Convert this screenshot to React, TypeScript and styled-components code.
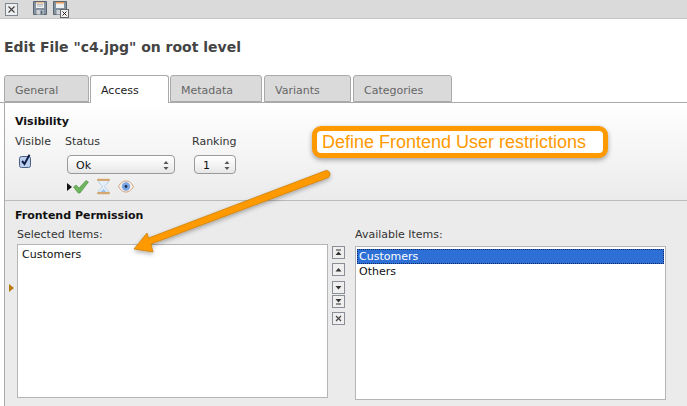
import React from "react";
import styled, { createGlobalStyle } from "styled-components";

const Global = createGlobalStyle`
  html, body { margin: 0; padding: 0; background: #fff; }
  * { box-sizing: border-box; }
`;

const font = `"DejaVu Sans", Verdana, sans-serif`;

const Page = styled.div`
  position: relative;
  width: 687px;
  height: 406px;
  overflow: hidden;
  background: #fff;
  font-family: ${font};
  font-size: 11px;
  color: #222;
`;

const Toolbar = styled.div`
  height: 19px;
  background: #dadada;
  border-bottom: 1px solid #c4c4c4;
  display: flex;
  align-items: flex-start;
  padding: 0 0 0 5px;
`;

const ToolIcon = styled.svg<{ $gap?: number; $top: number }>`
  display: block;
  margin-left: ${(p) => p.$gap ?? 0}px;
  margin-top: ${(p) => p.$top}px;
`;

const Heading = styled.h1`
  margin: 0;
  padding: 20px 0 0 4px;
  height: 56px;
  font-size: 14px;
  line-height: 16px;
  font-weight: 700;
  color: #444;
`;

const Tabs = styled.div`
  display: flex;
  padding-left: 4px;
  height: 28px;
  border-bottom: 1px solid #aaa;
`;

const Tab = styled.div<{ $w: number; $active?: boolean; $gap: number }>`
  width: ${(p) => p.$w}px;
  margin-right: ${(p) => p.$gap}px;
  height: ${(p) => (p.$active ? 28 : 27)}px;
  background: ${(p) => (p.$active ? "#fff" : "#dadada")};
  border: 1px solid #aaa;
  border-bottom: ${(p) => (p.$active ? "none" : "1px solid #aaa")};
  border-radius: 3px 3px 0 0;
  padding: 8px 0 0 10px;
  font-size: 11px;
  line-height: 14px;
  color: ${(p) => (p.$active ? "#222" : "#666")};
  position: relative;
`;

const Body = styled.div`
  margin-left: 4px;
  border-left: 1px solid #aaa;
`;

const Visibility = styled.section`
  height: 98px;
  padding: 12px 0 0 10px;
  background: linear-gradient(#fff, #ebebeb);
  border-bottom: 1px solid #bbb;
`;

const SectionTitle = styled.h2`
  margin: 0;
  font-size: 11px;
  line-height: 13px;
  font-weight: 700;
  color: #111;
`;

const FieldRow = styled.div`
  display: flex;
  margin-top: 7px;
`;

const Field = styled.div<{ $w: number }>`
  width: ${(p) => p.$w}px;
`;

const FieldLabel = styled.div`
  font-size: 11px;
  line-height: 13px;
  color: #333;
`;

const CheckWrap = styled.div`
  margin: 6px 0 0 4px;
  width: 13px;
  height: 14px;
`;

const FakeSelect = styled.div<{ $w: number; $ml: number }>`
  margin: 7px 0 0 ${(p) => p.$ml}px;
  width: ${(p) => p.$w}px;
  height: 19px;
  border: 1px solid #9a9a9a;
  border-radius: 4px;
  background: linear-gradient(#fff, #f4f4f4 50%, #e6e6e6);
  display: flex;
  align-items: center;
  justify-content: space-between;
  padding: 1px 5px 0 8px;
  font-size: 11px;
  color: #111;
`;

const StatusIcons = styled.div`
  display: flex;
  align-items: center;
  gap: 7px;
  margin: 4px 0 0 2px;
`;

const Marker2 = styled.svg`
  margin-right: -6px;
`;

const Permission = styled.section`
  background: #ebebeb;
  height: 206px;
  padding: 8px 0 0 10px;
  position: relative;
`;

const Lists = styled.div`
  display: flex;
  margin: 6px 0 0 0;
  align-items: flex-start;
`;

const ListColumn = styled.div<{ $w: number; $pad: number }>`
  width: ${(p) => p.$w}px;
  padding-left: ${(p) => p.$pad}px;
`;

const ListBox = styled.div<{ $h: number; $top: number }>`
  margin-top: ${(p) => p.$top}px;
  height: ${(p) => p.$h}px;
  background: #fff;
  border: 1px solid #b5b5b5;
  font-size: 11px;
  padding: 2px 1px;
  color: #111;
`;

const Option = styled.div<{ $selected?: boolean; $indent: number }>`
  padding-left: ${(p) => p.$indent}px;
  height: 15px;
  line-height: 15px;
  background: ${(p) => (p.$selected ? "#2e6fd6" : "transparent")};
  color: ${(p) => (p.$selected ? "#fff" : "#111")};
  outline: ${(p) => (p.$selected ? "1px dotted #0b2a66" : "none")};
  outline-offset: -1px;
`;

const MoveButtons = styled.div`
  width: 27px;
  margin-top: 18px;
  padding-left: 4px;
  display: flex;
  flex-direction: column;
`;

const MoveButton = styled.svg<{ $mb: number }>`
  display: block;
  margin-bottom: ${(p) => p.$mb}px;
`;

const Marker = styled.div`
  position: absolute;
  left: 4px;
  top: 83px;
  width: 0;
  height: 0;
  border-left: 5px solid #b97a10;
  border-top: 4px solid transparent;
  border-bottom: 4px solid transparent;
`;

const Callout = styled.div`
  position: absolute;
  left: 312px;
  top: 126px;
  width: 296px;
  height: 32px;
  border: 5px solid #ff9900;
  border-radius: 9px;
  background: #fff;
  box-shadow: 0 2px 5px rgba(0, 0, 0, 0.35);
  color: #ff9900;
  font-family: "Liberation Sans", Arial, sans-serif;
  font-size: 18px;
  line-height: 22px;
  padding-left: 5px;
  white-space: nowrap;
`;

const ArrowSvg = styled.svg`
  position: absolute;
  left: 0;
  top: 0;
  pointer-events: none;
`;

const CloseDoc = () => (
  <ToolIcon $top={3} width="13" height="13" viewBox="0 0 13 13">
    <rect x=".5" y=".5" width="12" height="12" fill="#eceef0" stroke="#7f868e" />
    <path d="M3.5 3.5l6 6M9.5 3.5l-6 6" stroke="#444" strokeWidth="1.2" />
  </ToolIcon>
);

const Floppy = ({ gap }: { gap: number }) => (
  <ToolIcon $gap={gap} $top={1} width="14" height="14" viewBox="0 0 14 14">
    <path d="M.5.5h13v13H.5z" fill="#8492a0" stroke="#5b6772" />
    <rect x="3" y="1" width="8" height="6" fill="#eef0f2" />
    <rect x="3" y="1" width="8" height="1.5" fill="#e9b98a" />
    <path d="M4 3.5h6M4 5h6" stroke="#b5bcc4" />
    <rect x="3.5" y="9" width="7" height="4.5" fill="#cfd4d9" />
    <rect x="7.5" y="9.5" width="2" height="4" fill="#5b6772" />
  </ToolIcon>
);

const FloppyClose = ({ gap }: { gap: number }) => (
  <ToolIcon $gap={gap} $top={1} width="16" height="17" viewBox="0 0 16 17">
    <path d="M.5.5h13v13H.5z" fill="#8492a0" stroke="#5b6772" />
    <rect x="3" y="1" width="8" height="6" fill="#eef0f2" />
    <rect x="3" y="1" width="8" height="1.5" fill="#e99a55" />
    <rect x="3.5" y="9" width="7" height="4.5" fill="#cfd4d9" />
    <rect x="7.5" y="8.5" width="8" height="8" fill="#f2f2f2" stroke="#666" />
    <path d="M9.5 10.5l4 4M13.5 10.5l-4 4" stroke="#222" />
  </ToolIcon>
);

const Updown = () => (
  <svg width="6" height="11" viewBox="0 0 6 11">
    <path d="M3 1l2.5 3h-5zM3 10L.5 7h5z" fill="#555" />
  </svg>
);

const Checkbox = () => (
  <svg width="13" height="14" viewBox="0 0 13 14" style={{ display: "block" }}>
    <rect x=".5" y="2.5" width="11" height="11" rx="2" fill="#bcd0ee" stroke="#4a5f86" />
    <path d="M3 7l2.5 3L10.5.8" fill="none" stroke="#10204a" strokeWidth="2" />
  </svg>
);

const Status = () => (
  <>
    <Marker2 width="5" height="8" viewBox="0 0 5 8">
      <path d="M0 0l5 4-5 4z" fill="#111" />
    </Marker2>
    <svg width="16" height="15" viewBox="0 0 16 15">
      <path d="M.5 8l2.7-2L6 9 13 1.5l2.5 1.5L7 14H5.2z" fill="#6cb55c" stroke="#4a8c3e" strokeWidth=".6" />
    </svg>
    <svg width="15" height="17" viewBox="0 0 15 17">
      <path d="M2.5 2.5h10C12.5 6 9 7 8.5 8.5c.5 1.5 4 3 4 6h-10c0-3 3.5-4.5 4-6C6 7 2.5 6 2.5 2.5z" fill="#e4effb" stroke="#b5cde8" />
      <path d="M4.5 14l3-3 3 3z" fill="#9cc0e8" />
      <rect x="1" y=".8" width="13" height="2.2" rx="1" fill="#d4a772" />
      <rect x="1" y="14" width="13" height="2.2" rx="1" fill="#d4a772" />
    </svg>
    <svg width="16" height="13" viewBox="0 0 16 13">
      <path d="M.5 6.5C3 2 5.5 1 8 1s5 1 7.5 5.5C13 11 10.5 12 8 12S3 11 .5 6.5z" fill="#f8efe6" stroke="#d2a383" />
      <circle cx="8" cy="6.5" r="4.2" fill="#7aa6e6" />
      <circle cx="8" cy="6.5" r="1.4" fill="#1d2f55" />
    </svg>
  </>
);

const glyphs: Record<string, string> = {
  top: "M4 3.5h5v1H4zM6.5 5.5L9.5 9h-6z",
  up: "M6.5 5L9.5 8.5h-6z",
  down: "M6.5 8.5L3.5 5h6z",
  bottom: "M6.5 7.5L3.5 4h6zM4 8.5h5v1H4z",
};

const Move = ({ kind, mb }: { kind: string; mb: number }) => (
  <MoveButton $mb={mb} width="13" height="13" viewBox="0 0 13 13">
    <rect x=".5" y=".5" width="12" height="12" fill="#efefef" stroke="#8a8f96" />
    {kind === "x" ? (
      <path d="M4 4l5 5M9 4l-5 5" stroke="#444" strokeWidth="1.2" />
    ) : (
      <path d={glyphs[kind]} fill="#333" />
    )}
  </MoveButton>
);

export default function App() {
  return (
    <Page>
      <Global />
      <Toolbar>
        <CloseDoc />
        <Floppy gap={15} />
        <FloppyClose gap={6} />
      </Toolbar>
      <Heading>Edit File "c4.jpg" on root level</Heading>
      <Tabs>
        <Tab $w={85} $gap={1}>General</Tab>
        <Tab $w={79} $gap={1} $active>Access</Tab>
        <Tab $w={92} $gap={2}>Metadata</Tab>
        <Tab $w={87} $gap={2}>Variants</Tab>
        <Tab $w={99} $gap={0}>Categories</Tab>
      </Tabs>
      <Body>
        <Visibility>
          <SectionTitle>Visibility</SectionTitle>
          <FieldRow>
            <Field $w={50}>
              <FieldLabel>Visible</FieldLabel>
              <CheckWrap><Checkbox /></CheckWrap>
            </Field>
            <Field $w={127}>
              <FieldLabel>Status</FieldLabel>
              <FakeSelect $w={108} $ml={2}>Ok<Updown /></FakeSelect>
              <StatusIcons><Status /></StatusIcons>
            </Field>
            <Field $w={60}>
              <FieldLabel>Ranking</FieldLabel>
              <FakeSelect $w={42} $ml={2}>1<Updown /></FakeSelect>
            </Field>
          </FieldRow>
        </Visibility>
        <Permission>
          <SectionTitle>Frontend Permission</SectionTitle>
          <Marker />
          <Lists>
            <ListColumn $w={313} $pad={2}>
              <FieldLabel>Selected Items:</FieldLabel>
              <ListBox $h={154} $top={3}><Option $indent={3}>Customers</Option></ListBox>
            </ListColumn>
            <MoveButtons>
              <Move kind="top" mb={4} />
              <Move kind="up" mb={5} />
              <Move kind="down" mb={1} />
              <Move kind="bottom" mb={4} />
              <Move kind="x" mb={0} />
            </MoveButtons>
            <ListColumn $w={311} $pad={0}>
              <FieldLabel>Available Items:</FieldLabel>
              <ListBox $h={154} $top={5}>
                <Option $indent={2} $selected>Customers</Option>
                <Option $indent={2}>Others</Option>
              </ListBox>
            </ListColumn>
          </Lists>
        </Permission>
      </Body>
      <Callout>Define Frontend User restrictions</Callout>
      <ArrowSvg width="687" height="406" viewBox="0 0 687 406">
        <defs>
          <filter id="s" x="-10%" y="-10%" width="120%" height="130%">
            <feDropShadow dx="0" dy="2" stdDeviation="2" floodColor="#000" floodOpacity="0.3" />
          </filter>
        </defs>
        <path
          d="M326 170.5 L148.5 238 L147 233 L134 249 L153 252 L151 244 L328.5 177.5 Q331 175 329.5 172 Q328 170 326 170.5 Z"
          fill="#ff9900"
          stroke="#c47a08"
          strokeWidth=".7"
          filter="url(#s)"
        />
      </ArrowSvg>
    </Page>
  );
}
